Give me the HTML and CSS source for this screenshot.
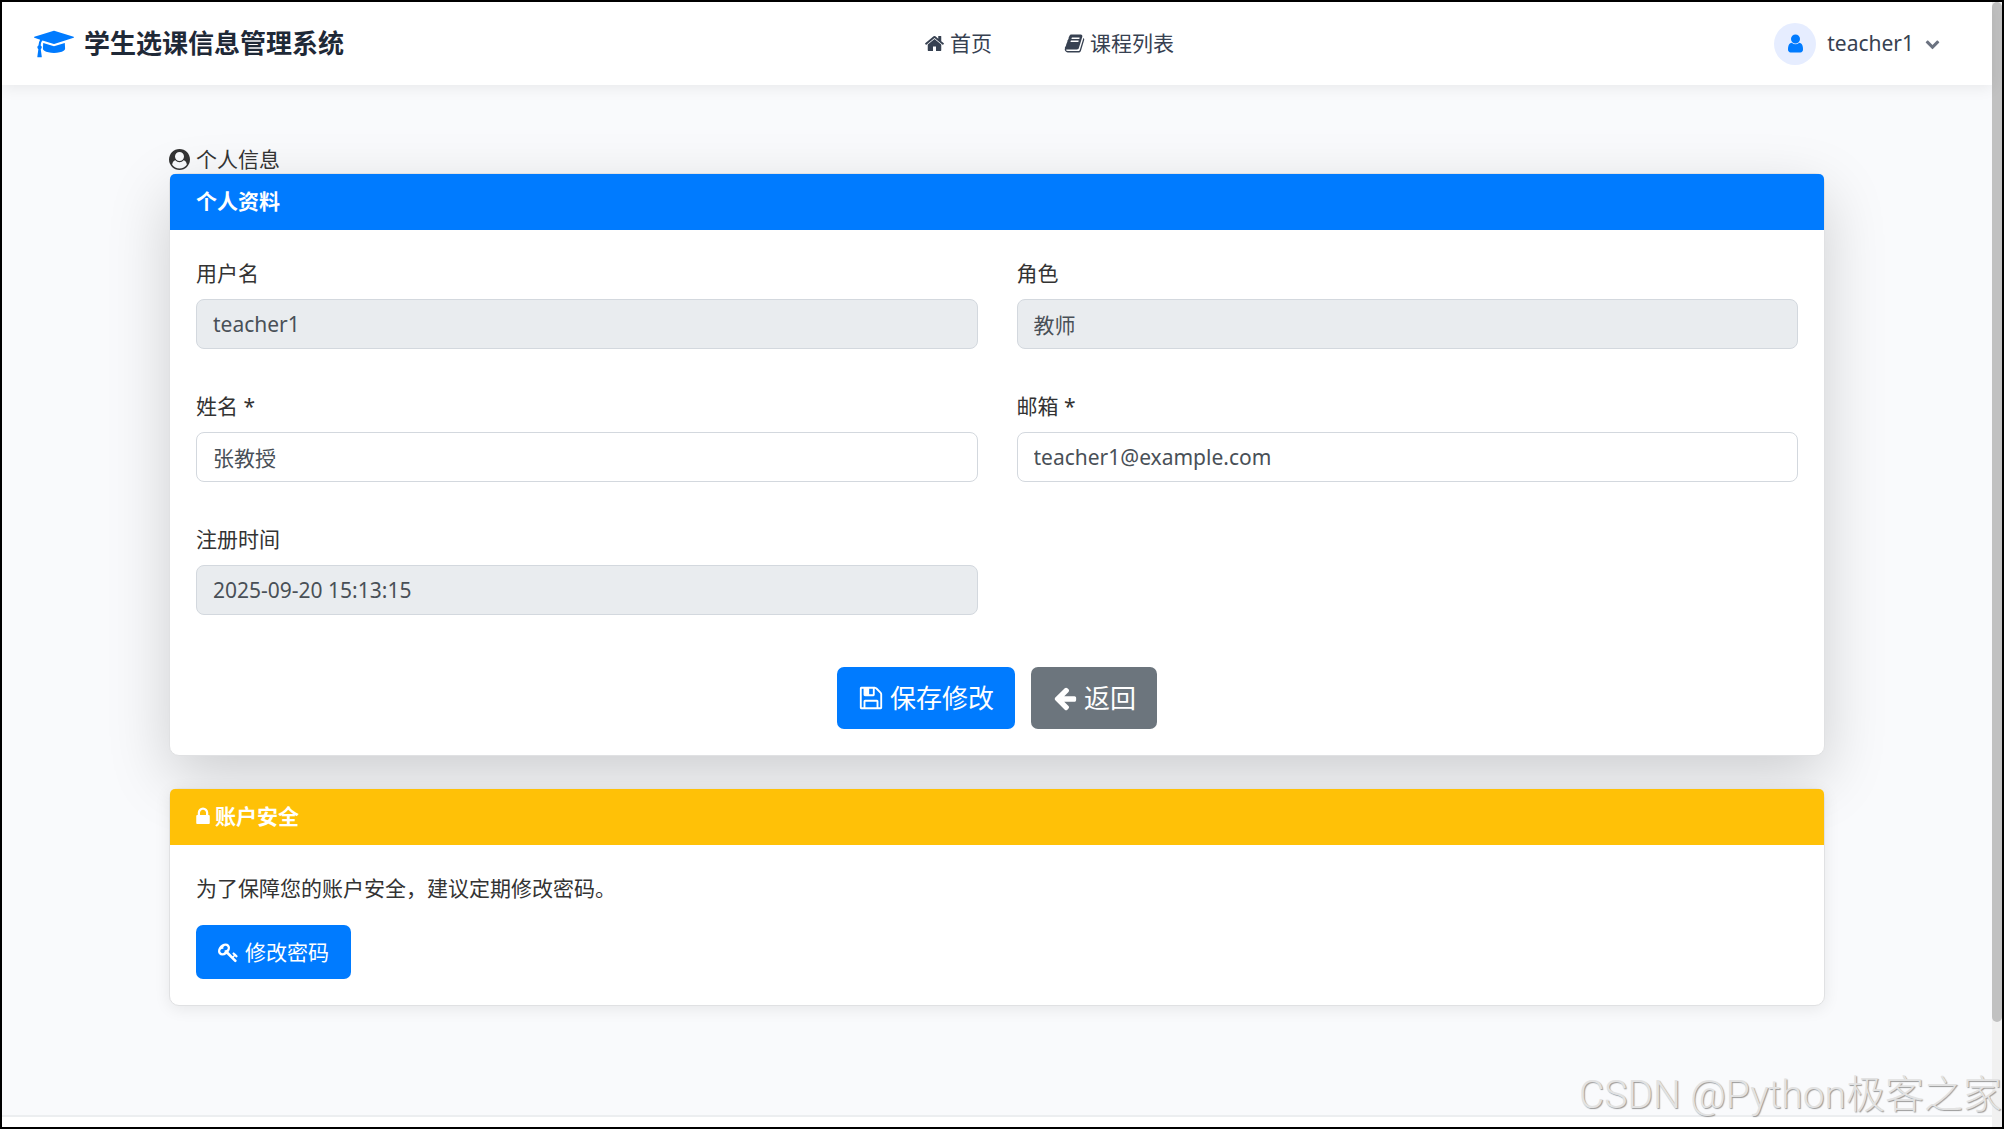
FILE: index.html
```html
<!DOCTYPE html>
<html lang="zh-CN">
<head>
    <meta charset="UTF-8">
    <meta name="viewport" content="width=device-width, initial-scale=1.0">
    <title>个人信息 - 学生选课信息管理系统</title>
    <link rel="stylesheet" href="styles.css">
</head>
<body>
    <div class="window">
        <div class="page">
            <header class="navbar">
                <a href="#" class="brand">
                    <svg class="brand-icon" viewBox="0 0 2304 1792"><path d="M1774 836l18 316q4 69-82 128t-235 93.5-323 34.5-323-34.5-235-93.5-82-128l18-316 574 181q22 7 48 7t48-7zm530-324q0 23-22 31l-1120 352q-4 1-10 1t-10-1l-652-206q-43 34-71 111.5t-34 178.5q63 36 63 109 0 69-58 107l58 433q2 14-8 25-9 11-24 11h-192q-15 0-24-11-10-11-8-25l58-433q-58-38-58-107 0-73 65-111 11-207 98-330l-333-104q-22-8-22-31t22-31l1120-352q4-1 10-1t10 1l1120 352q22 8 22 31z"/></svg>
                    学生选课信息管理系统
                </a>
                <nav class="nav-links">
                    <a href="#">
                        <svg class="icon" viewBox="0 0 1792 1792"><path d="M1472 992v480q0 26-19 45t-45 19h-384v-384h-256v384h-384q-26 0-45-19t-19-45v-480q0-1 .5-3t.5-3l575-474 575 474q1 2 1 6zm223-69l-62 74q-8 9-21 11h-3q-13 0-21-7l-692-577-692 577q-12 8-24 7-13-2-21-11l-62-74q-8-10-7-23.5t11-21.5l719-599q32-26 76-26t76 26l244 204v-195q0-14 9-23t23-9h192q14 0 23 9t9 23v408l219 182q10 8 11 21.5t-7 23.5z"/></svg>
                        首页
                    </a>
                    <a href="#">
                        <svg class="icon" viewBox="0 0 1792 1792"><path d="M1703 478q40 57 18 129l-275 906q-19 64-76.5 107.5t-122.5 43.5h-923q-77 0-148.5-53.5t-99.5-131.5q-24-67-2-127 0-4 3-27t4-37q1-8-3-21.5t-3-19.5q2-11 8-21t16.5-23.5 16.5-23.5q23-38 45-91.5t30-91.5q3-10 .5-30t-.5-28q3-11 17-28t17-23q21-36 42-92t25-90q1-9-2.5-32t.5-28q4-13 22-30.5t22-22.5q19-26 42.5-84.5t27.5-96.5q1-8-3-25.5t-2-26.5q2-8 9-18t18-23 17-21q8-12 16.5-30.5t15-35 16-36 19.5-32 26.5-23.5 36-11.5 47.5 5.5l-1 3q38-9 51-9h761q74 0 114 56t18 130l-274 906q-36 119-71.5 153.5t-128.5 34.5h-869q-27 0-38 15-11 16-1 43 24 70 144 70h923q29 0 56-15.5t35-41.5l300-987q7-22 5-57 38 15 59 43zm-1064 2q-4 13 2 22.5t20 9.5h608q13 0 25.5-9.5t16.5-22.5l21-64q4-13-2-22.5t-20-9.5h-608q-13 0-25.5 9.5t-16.5 22.5zm-83 256q-4 13 2 22.5t20 9.5h608q13 0 25.5-9.5t16.5-22.5l21-64q4-13-2-22.5t-20-9.5h-608q-13 0-25.5 9.5t-16.5 22.5z"/></svg>
                        课程列表
                    </a>
                </nav>
                <button type="button" class="user-menu">
                    <span class="avatar">
                        <svg class="icon" viewBox="0 0 1792 1792"><path d="M1536 1399q0 109-62.5 187t-150.5 78h-854q-88 0-150.5-78t-62.5-187q0-85 8.5-160.5t31.5-152 58.5-131 94-89 134.5-34.5q131 128 313 128t313-128q76 0 134.5 34.5t94 89 58.5 131 31.5 152 8.5 160.5zm-256-887q0 159-112.5 271.5t-271.5 112.5-271.5-112.5-112.5-271.5 112.5-271.5 271.5-112.5 271.5 112.5 112.5 271.5z"/></svg>
                    </span>
                    teacher1
                    <svg class="chevron" viewBox="0 0 1792 1792"><path d="M1683 808l-742 741q-19 19-45 19t-45-19l-742-741q-19-19-19-45.5t19-45.5l166-165q19-19 45-19t45 19l531 531 531-531q19-19 45-19t45 19l166 165q19 19 19 45.5t-19 45.5z"/></svg>
                </button>
            </header>

            <main class="content">
                <div class="page-title">
                    <svg class="icon" viewBox="0 0 1792 1792"><path d="M1523 1339q-22-155-87.5-257.5t-184.5-118.5q-67 74-159.5 115.5t-195.5 41.5-195.5-41.5-159.5-115.5q-119 16-184.5 118.5t-87.5 257.5q106 150 271 237.5t356 87.5 356-87.5 271-237.5zm-243-699q0-159-112.5-271.5t-271.5-112.5-271.5 112.5-112.5 271.5 112.5 271.5 271.5 112.5 271.5-112.5 112.5-271.5zm512 256q0 182-71 347.5t-190.5 286-285.5 191.5-349 71q-182 0-348-71t-286-191-191-286-71-348 71-348 191-286 286-191 348-71 348 71 286 191 191 286 71 348z" fill-rule="evenodd"/></svg>
                    个人信息
                </div>

                <section class="card card-profile">
                    <h2 class="card-header header-primary">个人资料</h2>
                    <form class="card-body">
                        <div class="form-grid">
                            <div class="field">
                                <label for="username">用户名</label>
                                <input type="text" id="username" value="teacher1" readonly>
                            </div>
                            <div class="field">
                                <label for="role">角色</label>
                                <input type="text" id="role" value="教师" readonly>
                            </div>
                            <div class="field">
                                <label for="name">姓名 *</label>
                                <input type="text" id="name" value="张教授" required>
                            </div>
                            <div class="field">
                                <label for="email">邮箱 *</label>
                                <input type="email" id="email" value="teacher1@example.com" required>
                            </div>
                            <div class="field">
                                <label for="created">注册时间</label>
                                <input type="text" id="created" value="2025-09-20 15:13:15" readonly>
                            </div>
                        </div>
                        <div class="form-actions">
                            <button type="submit" class="btn btn-lg btn-primary">
                                <svg class="icon" viewBox="0 0 1792 1792"><path d="M512 1536h768v-384h-768v384zm896 0h128v-896q0-14-10-38.5t-20-34.5l-281-281q-10-10-34-20t-39-10v416q0 40-28 68t-68 28h-576q-40 0-68-28t-28-68v-416h-128v1280h128v-416q0-40 28-68t68-28h832q40 0 68 28t28 68v416zm-384-928v-320q0-13-9.5-22.5t-22.5-9.5h-192q-13 0-22.5 9.5t-9.5 22.5v320q0 13 9.5 22.5t22.5 9.5h192q13 0 22.5-9.5t9.5-22.5zm640 32v928q0 40-28 68t-68 28h-1344q-40 0-68-28t-28-68v-1344q0-40 28-68t68-28h928q40 0 88 20t76 48l280 280q28 28 48 76t20 88z"/></svg>
                                保存修改
                            </button>
                            <a href="#" class="btn btn-lg btn-secondary">
                                <svg class="icon" viewBox="0 0 1792 1792"><path d="M1664 896v128q0 53-32.5 90.5t-84.5 37.5h-704l293 294q38 36 38 90t-38 90l-75 76q-37 37-90 37-52 0-91-37l-651-652q-37-37-37-90 0-52 37-91l651-650q38-38 91-38 52 0 90 38l75 74q38 38 38 91t-38 91l-293 293h704q52 0 84.5 37.5t32.5 90.5z"/></svg>
                                返回
                            </a>
                        </div>
                    </form>
                </section>

                <section class="card">
                    <h2 class="card-header header-warning">
                        <svg class="icon lock-icon" viewBox="320 0 1152 1792"><path d="M640 768h512v-192q0-106-75-181t-181-75-181 75-75 181v192zm832 96v576q0 40-28 68t-68 28h-960q-40 0-68-28t-28-68v-576q0-40 28-68t68-28h32v-192q0-184 132-316t316-132 316 132 132 316v192h32q40 0 68 28t28 68z"/></svg>
                        账户安全
                    </h2>
                    <div class="card-body">
                        <p class="tip">为了保障您的账户安全，建议定期修改密码。</p>
                        <a href="#" class="btn btn-primary">
                            <svg class="icon" viewBox="0 0 1792 1792"><path d="M832 512q0-80-56-136t-136-56-136 56-56 136q0 42 19 83-41-19-83-19-80 0-136 56t-56 136 56 136 136 56 136-56 56-136q0-42-19-83 41 19 83 19 80 0 136-56t56-136zm851 704q0 17-49 66t-66 49q-9 0-28.5-16t-36.5-33-38.5-40-24.5-26l-96 96 220 220q28 28 28 68 0 42-39 81t-81 39q-40 0-68-28l-671-671q-176 131-365 131-163 0-265.5-102.5t-102.5-265.5q0-160 95-313t248-248 313-95q163 0 265.5 102.5t102.5 265.5q0 189-131 365l355 355 96-96q-3-3-26-24.5t-40-38.5-33-36.5-16-28.5q0-17 49-66t66-49q13 0 23 10 6 6 46 44.5t82 79.5 86.5 86 73 78 28.5 41z"/></svg>
                            修改密码
                        </a>
                    </div>
                </section>
            </main>

            <footer class="footer"></footer>
        </div>
        <div class="scrollbar"><div class="thumb"></div></div>
        <div class="watermark">CSDN @Python极客之家</div>
    </div>
</body>
</html>
```
FILE: styles.css
```css
*{
    box-sizing: border-box;
    margin: 0;
}
body{
    font-family: "Noto Sans", "Noto Sans CJK SC", sans-serif;
    font-size: 21px;
    line-height: 31px;
    color: #333;
}
a{
    color: inherit;
    text-decoration: none;
}
button, input{
    font: inherit;
}
.window{
    position: relative;
    display: flex;
    min-height: 100vh;
    border: 2px solid #000;
}
.page{
    flex: 1;
    display: flex;
    flex-direction: column;
    background-color: #f9fafc;
}

/* top bar */
.navbar{
    position: relative;
    display: flex;
    justify-content: space-between;
    align-items: center;
    height: 83px;
    padding: 0 32px;
    background-color: #fff;
    box-shadow: 0 2px 15px rgba(0,0,0,0.08);
}
.brand{
    display: flex;
    align-items: center;
    gap: 10px;
    font-size: 26px;
    font-weight: bold;
    color: #1f2937;
}
.brand-icon{
    width: 40px;
    height: 32px;
    fill: #007bff;
}
.icon{
    width: 21px;
    height: 21px;
    fill: currentColor;
}
.nav-links{
    display: flex;
    gap: 72px;
    color: #374151;
}
.nav-links a, .page-title, .card-header{
    display: flex;
    align-items: center;
    gap: 5px;
}
.user-menu{
    display: flex;
    align-items: center;
    gap: 11px;
    padding: 0 20px;
    border: none;
    background: none;
    color: #374151;
}
.avatar{
    display: flex;
    align-items: center;
    justify-content: center;
    width: 42px;
    height: 42px;
    border-radius: 50%;
    background-color: #e6edff;
    color: #007bff;
}
.chevron{
    width: 15px;
    height: 15px;
    fill: #6b7280;
}

/* cards */
.content{
    flex: 1;
    width: 100%;
    max-width: 1656px;
    margin: 0 auto;
    padding-top: 60px;
}
.page-title{
    gap: 6px;
    line-height: 28px;
}
.card{
    margin-bottom: 32px;
    border: 1px solid #e0e1e3;
    border-radius: 10px;
    background-color: #fff;
    box-shadow: 0 3px 16px rgba(0,0,0,0.08);
}
.card-profile{
    box-shadow: 0 21px 62px rgba(0,0,0,0.175);
}
.card-header{
    padding: 12px 26px 13px;
    border-radius: 5px 5px 0 0;
    font-size: 21px;
    font-weight: bold;
    color: #fff;
}
.header-primary{
    background-color: #007bff;
}
.header-warning{
    background-color: #ffc107;
}
.lock-icon{
    width: 14px;
}
.card-body{
    padding: 28px 26px 26px;
}
.form-grid{
    display: grid;
    grid-template-columns: 1fr 1fr;
    gap: 42px 39px;
}
.field{
    display: flex;
    flex-direction: column;
    gap: 10px;
}
.field input{
    width: 100%;
    height: 50px;
    padding: 0 16px;
    border: 1px solid #d3d8de;
    border-radius: 8px;
    background-color: #fff;
    color: #495057;
}
.field input:read-only{
    background-color: #e9ecef;
}
.form-actions{
    display: flex;
    justify-content: center;
    gap: 16px;
    margin-top: 52px;
}
.btn{
    display: inline-flex;
    align-items: center;
    gap: 6px;
    height: 54px;
    padding: 0 22px;
    border: none;
    border-radius: 7px;
    color: #fff;
}
.btn-lg{
    height: 62px;
    padding: 0 21px;
    font-size: 26px;
}
.btn-lg .icon{
    width: 26px;
    height: 26px;
}
.btn-primary{
    background-color: #007bff;
}
.btn-secondary{
    background-color: #6c757d;
}
.tip{
    margin-bottom: 21px;
}
.footer{
    height: 12px;
    border-top: 2px solid #eceef0;
    background-color: #fff;
}

.scrollbar{
    width: 10px;
    background-color: #f1f1f1;
}
.thumb{
    height: 1020px;
    max-height: 91%;
    border-radius: 5px;
    background-color: #c1c1c1;
}
.watermark{
    position: absolute;
    right: 0;
    bottom: 10px;
    font-family: Roboto, "Noto Sans CJK SC", sans-serif;
    font-size: 39px;
    font-weight: 300;
    line-height: 44px;
    color: #e2e2e2;
    text-shadow: 1px 1px 1px #999;
}
```
